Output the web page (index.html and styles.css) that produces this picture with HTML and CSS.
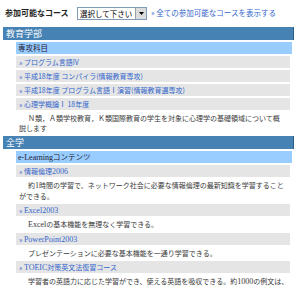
FILE: index.html
```html
<!DOCTYPE html>
<html lang="ja">
<head>
<meta charset="utf-8">
<link rel="stylesheet" href="styles.css">
</head>
<body>
<div class="top">
  <span class="title">参加可能なコース</span>
  <span class="select"><span class="sel-text">選択して下さい</span><span class="sel-btn"><svg width="5" height="3" viewBox="0 0 5 3"><path d="M0 0h5L2.5 3z" fill="#000"/></svg></span></span>
  <a class="alllink">» 全ての参加可能なコースを表示する</a>
</div>

<div class="sec">教育学部</div>
<div class="cat">専攻科目</div>
<div class="item"><a>» プログラム言語IV</a></div>
<div class="item"><a>» 平成18年度 コンパイラ(情報教育専攻)</a></div>
<div class="item"><a>» 平成18年度 プログラム言語Ⅰ演習(情報教育選専攻)</a></div>
<div class="item"><a>» 心理学概論Ⅰ 18年度</a></div>
<div class="desc">Ｎ類，Ａ類学校教育，Ｋ類国際教育の学生を対象に心理学の基礎領域について概<br>説します</div>

<div class="sec">全学</div>
<div class="cat"><span class="lat">e-Learning</span>コンテンツ</div>
<div class="item"><a>» 情報倫理<span class="lat">2006</span></a></div>
<div class="desc">約<span class="lat">1</span>時間の学習で、ネットワーク社会に必要な情報倫理の最新知識を学習すること<br>ができる。</div>
<div class="item"><a>» <span class="lat">Excel2003</span></a></div>
<div class="desc"><span class="lat">Excel</span>の基本機能を無理なく学習できる。</div>
<div class="item"><a>» <span class="lat">PowerPoint2003</span></a></div>
<div class="desc">プレゼンテーションに必要な基本機能を一通り学習できる。</div>
<div class="item"><a>» <span class="lat">TOEIC</span>対策英文法復習コース</a></div>
<div class="desc">学習者の英語力に応じた学習ができ、使える英語を吸収できる。約<span class="lat">1000</span>の例文は、<br>ネイティブスピーカーの音声で聞くこともできる。</div>
</body>
</html>
```

FILE: styles.css
```css
html, body {
  margin: 0;
  background: #fff;
}
body {
  padding: 5px 6px 0 3px;
  font-family: "Noto Sans CJK JP", sans-serif;
  font-size: 7px;
  line-height: 10px;
  color: #333;
  overflow: hidden;
  height: 288px;
  box-sizing: border-box;
}
.top {
  display: flex;
  align-items: center;
  height: 16px;
  margin-bottom: 6px;
  white-space: nowrap;
}
.title {
  font-weight: bold;
  font-size: 8px;
  color: #222;
  margin-left: 2px;
  width: 72px;
}
.select {
  display: flex;
  align-items: center;
  height: 13px;
  border: 1px solid #7f9db9;
  background: #fff;
  width: 70px;
  box-sizing: border-box;
}
.sel-text {
  flex: 1;
  padding-left: 2px;
  font-size: 7.5px;
  color: #000;
  line-height: 11px;
}
.sel-btn {
  width: 10px;
  height: 11px;
  background: #dcdcdc;
  border-left: 1px solid #a0a0a0;
  display: flex;
  align-items: center;
  justify-content: center;
}
.alllink {
  margin-left: 4px;
  font-size: 7.5px;
  color: #3366cc;
}
.sec {
  background: #4682b4;
  border-right: 1px solid #2a5f8f;
  color: #fff;
  height: 13px;
  line-height: 13px;
  font-size: 9px;
  padding-left: 3px;
  margin-bottom: 2px;
}
.cat {
  background: #99ccff;
  margin-left: 13px;
  margin-right: 2px;
  height: 12px;
  line-height: 12px;
  padding-left: 2px;
  color: #223;
  font-size: 7.5px;
  margin-bottom: 2px;
}
.item {
  background: #e5e5e5;
  margin-left: 13px;
  margin-right: 4px;
  height: 12px;
  line-height: 12px;
  padding-left: 3px;
  margin-bottom: 2px;
}
.item a {
  color: #3366cc;
}
.desc {
  margin-left: 16px;
  margin-right: 4px;
  text-indent: 9px;
  padding: 1px 0 3px;
  line-height: 10px;
  color: #3a3a3a;
  white-space: nowrap;
}
.lat {
  font-family: "Liberation Serif", serif;
  font-size: 8px;
}
```
